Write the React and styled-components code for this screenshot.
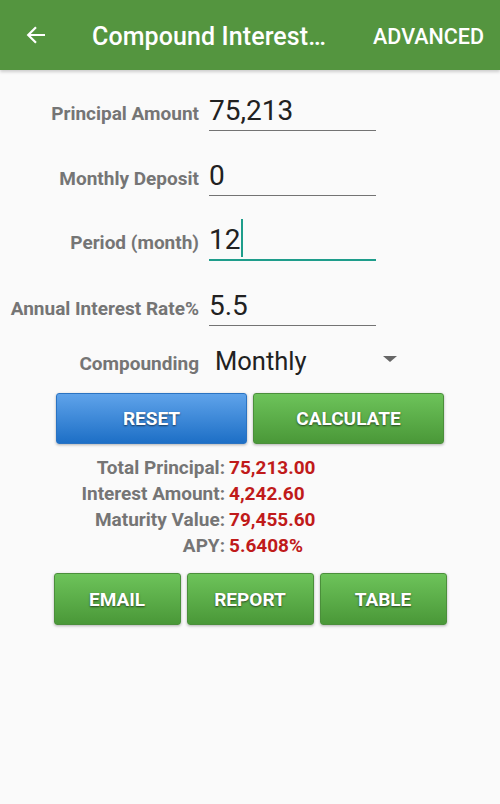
import React from "react";
import styled, { createGlobalStyle, css } from "styled-components";

const GlobalStyle = createGlobalStyle`
  html, body {
    margin: 0;
    padding: 0;
    background: #fafafa;
    font-family: Roboto, "Noto Sans", sans-serif;
  }
`;

const Screen = styled.div`
  width: 500px;
  height: 804px;
  background: #fafafa;
  overflow: hidden;
`;

const AppBar = styled.header`
  display: flex;
  align-items: center;
  height: 70px;
  background: #54953f;
  color: #fff;
  box-shadow: 0 2px 3px rgba(0, 0, 0, 0.18);
  position: relative;
  z-index: 1;
`;

const BackButton = styled.div`
  display: flex;
  align-items: center;
  justify-content: center;
  width: 20px;
  height: 20px;
  margin-left: 26px;
`;

const Title = styled.h1`
  margin: 0 0 0 46px;
  font-size: 25px;
  font-weight: 500;
  letter-spacing: 0.1px;
  flex: 1;
  white-space: nowrap;
  position: relative;
  top: 1px;
`;

const Action = styled.span`
  font-size: 21.5px;
  font-weight: 500;
  margin-right: 16px;
  position: relative;
  top: 1px;
`;

const Form = styled.main`
  display: flex;
  flex-direction: column;
  padding-top: 12px;
`;

const Row = styled.div`
  display: flex;
  align-items: baseline;
  margin-bottom: 16px;
`;

const Label = styled.label`
  width: 199px;
  text-align: right;
  font-size: 19px;
  font-weight: 700;
  color: #757575;
  white-space: nowrap;
`;

const Field = styled.div`
  position: relative;
  margin-left: 10px;
  width: 167px;
  height: 49px;
  display: flex;
  align-items: flex-end;
  box-sizing: border-box;
  padding-bottom: 3px;
  font-size: 28px;
  line-height: 32px;
  color: #212121;
  border-bottom: 1px solid #737373;
  ${(p) =>
    p.$focused &&
    css`
      border-bottom: 2px solid #1e9d8b;
      padding-bottom: 2px;
    `}
`;

const Caret = styled.span`
  display: inline-block;
  width: 2px;
  height: 38px;
  background: #1e9d8b;
  margin-left: 1px;
  vertical-align: -8px;
`;

const SpinnerRow = styled.div`
  display: flex;
  align-items: baseline;
  margin-top: 4px;
  height: 47px;
`;

const Spinner = styled.div`
  display: flex;
  align-items: center;
  margin-left: 16px;
  width: 190px;
  font-size: 25.5px;
  color: #212121;
  justify-content: space-between;
`;

const Caretdown = styled.span`
  width: 0;
  height: 0;
  border-left: 7px solid transparent;
  border-right: 7px solid transparent;
  border-top: 6px solid #666;
  margin-right: 8px;
  position: relative;
  top: -2px;
`;

const ButtonRow = styled.div`
  display: flex;
  justify-content: center;
  gap: ${(p) => p.$gap || 6}px;
  margin-top: ${(p) => p.$top || 0}px;
`;

const Button = styled.button`
  width: ${(p) => p.$width}px;
  height: ${(p) => p.$height}px;
  border-radius: 3px;
  border: 1px solid ${(p) => (p.$blue ? "#2a73c2" : "#4b8f3b")};
  background: ${(p) =>
    p.$blue
      ? "linear-gradient(to bottom, #5fa3ea, #1d6fc6)"
      : "linear-gradient(to bottom, #6dc35a, #4a9838)"};
  box-shadow: 0 1px 3px rgba(0, 0, 0, 0.3);
  color: #fff;
  font-family: Roboto, sans-serif;
  font-size: 19px;
  font-weight: 700;
  text-shadow: 0 1px 2px rgba(0, 0, 0, 0.6);
  padding: 0;
`;

const Results = styled.div`
  display: grid;
  grid-template-columns: 225px auto;
  column-gap: 4px;
  margin-top: 11px;
  font-size: 19px;
  font-weight: 700;
  line-height: 26px;
`;

const ResultLabel = styled.span`
  text-align: right;
  color: #757575;
`;

const ResultValue = styled.span`
  color: #c01a1a;
`;

const fields = [
  { label: "Principal Amount", value: "75,213" },
  { label: "Monthly Deposit", value: "0" },
  { label: "Period (month)", value: "12", focused: true },
  { label: "Annual Interest Rate%", value: "5.5" },
];

const results = [
  ["Total Principal:", "75,213.00"],
  ["Interest Amount:", "4,242.60"],
  ["Maturity Value:", "79,455.60"],
  ["APY:", "5.6408%"],
];

const App = () => {
  return (
    <Screen>
      <GlobalStyle />
      <AppBar>
        <BackButton>
          <svg width="20" height="20" viewBox="0 0 20 20">
            <path
              d="M19 10H2.5M10 2.2L2.2 10L10 17.8"
              fill="none"
              stroke="#fff"
              strokeWidth="2.2"
            />
          </svg>
        </BackButton>
        <Title>Compound Interest…</Title>
        <Action>ADVANCED</Action>
      </AppBar>
      <Form>
        {fields.map((f) => (
          <Row key={f.label}>
            <Label>{f.label}</Label>
            <Field $focused={f.focused}>
              <span>
                {f.value}
                {f.focused && <Caret />}
              </span>
            </Field>
          </Row>
        ))}
        <SpinnerRow>
          <Label>Compounding</Label>
          <Spinner>
            <span>Monthly</span>
            <Caretdown />
          </Spinner>
        </SpinnerRow>
        <ButtonRow $gap={6}>
          <Button $blue $width={191} $height={51}>
            RESET
          </Button>
          <Button $width={191} $height={51}>
            CALCULATE
          </Button>
        </ButtonRow>
        <Results>
          {results.map(([l, v]) => (
            <React.Fragment key={l}>
              <ResultLabel>{l}</ResultLabel>
              <ResultValue>{v}</ResultValue>
            </React.Fragment>
          ))}
        </Results>
        <ButtonRow $gap={6} $top={14}>
          <Button $width={127} $height={52}>
            EMAIL
          </Button>
          <Button $width={127} $height={52}>
            REPORT
          </Button>
          <Button $width={127} $height={52}>
            TABLE
          </Button>
        </ButtonRow>
      </Form>
    </Screen>
  );
};

export default App;
